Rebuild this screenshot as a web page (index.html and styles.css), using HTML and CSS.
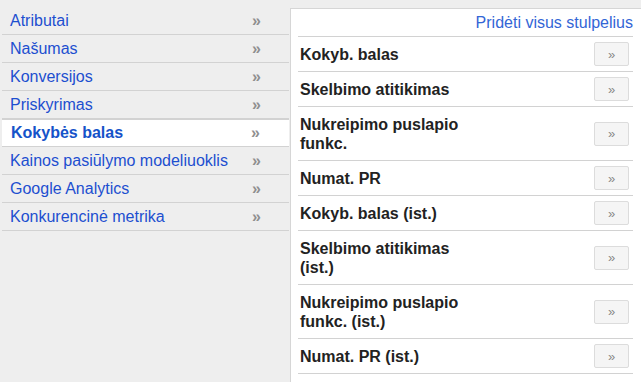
FILE: index.html
```html
<!DOCTYPE html>
<html lang="lt">
<head>
    <meta charset="UTF-8">
    <meta name="viewport" content="width=device-width, initial-scale=1.0">
    <title>Stulpeliai</title>
    <link rel="stylesheet" href="styles.css">
</head>
<body>
    <div class="page">
        <ul class="categories">
            <li class="category"><span class="category-name">Atributai</span><span class="chevron">»</span></li>
            <li class="category"><span class="category-name">Našumas</span><span class="chevron">»</span></li>
            <li class="category"><span class="category-name">Konversijos</span><span class="chevron">»</span></li>
            <li class="category"><span class="category-name">Priskyrimas</span><span class="chevron">»</span></li>
            <li class="category selected"><span class="category-name">Kokybės balas</span><span class="chevron">»</span></li>
            <li class="category"><span class="category-name">Kainos pasiūlymo modeliuoklis</span><span class="chevron">»</span></li>
            <li class="category"><span class="category-name">Google Analytics</span><span class="chevron">»</span></li>
            <li class="category"><span class="category-name">Konkurencinė metrika</span><span class="chevron">»</span></li>
        </ul>

        <div class="columns-panel">
            <div class="panel-header">
                <a href="#" class="add-all">Pridėti visus stulpelius</a>
            </div>
            <div class="column-row">
                <span class="column-name">Kokyb. balas</span>
                <button type="button" class="btn-add">»</button>
            </div>
            <div class="column-row">
                <span class="column-name">Skelbimo atitikimas</span>
                <button type="button" class="btn-add">»</button>
            </div>
            <div class="column-row">
                <span class="column-name">Nukreipimo puslapio funkc.</span>
                <button type="button" class="btn-add">»</button>
            </div>
            <div class="column-row">
                <span class="column-name">Numat. PR</span>
                <button type="button" class="btn-add">»</button>
            </div>
            <div class="column-row">
                <span class="column-name">Kokyb. balas (ist.)</span>
                <button type="button" class="btn-add">»</button>
            </div>
            <div class="column-row">
                <span class="column-name">Skelbimo atitikimas (ist.)</span>
                <button type="button" class="btn-add">»</button>
            </div>
            <div class="column-row">
                <span class="column-name">Nukreipimo puslapio funkc. (ist.)</span>
                <button type="button" class="btn-add">»</button>
            </div>
            <div class="column-row">
                <span class="column-name">Numat. PR (ist.)</span>
                <button type="button" class="btn-add">»</button>
            </div>
        </div>
    </div>
</body>
</html>
```

FILE: styles.css
```css
body {
    margin: 0;
    font-family: "Liberation Sans", Arial, sans-serif;
    background-color: #eeeeee;
}

.page {
    display: flex;
    align-items: flex-start;
    min-height: 100vh;
}

.categories {
    list-style: none;
    margin: 7px 1px 0 2px;
    padding: 0;
    width: 287px;
    flex-shrink: 0;
}

.category {
    display: flex;
    align-items: center;
    height: 27px;
    padding-left: 8px;
    border-bottom: 1px solid #d2d2d2;
    font-size: 16px;
    color: #1d4fd0;
}

.category-name {
    flex: 1;
}

.chevron {
    width: 37px;
    font-weight: bold;
    color: #8f8f8f;
}

.category.selected {
    background-color: white;
    box-shadow: inset 0 1px 0 #d2d2d2;
    padding-left: 9px;
}

.category.selected .category-name {
    font-weight: bold;
    color: #1553c9;
}

.category.selected .chevron {
    width: 38px;
}

.columns-panel {
    flex: 1;
    align-self: stretch;
    margin-top: 8px;
    padding: 0 8px 0 7px;
    background: white;
    border-top: 1px solid #d6d6d6;
    border-left: 1px solid #d6d6d6;
}

.panel-header {
    height: 27px;
    display: flex;
    align-items: center;
    justify-content: flex-end;
    border-bottom: 1px solid #d2d2d2;
}

.add-all {
    font-size: 16px;
    color: #3366d6;
    text-decoration: none;
}

.column-row {
    display: flex;
    align-items: center;
    justify-content: space-between;
    padding: 5px 4px 5px 2px;
    border-bottom: 1px solid #d2d2d2;
}

.column-name {
    width: 175px;
    padding: 3px 0 2px;
    font-size: 16px;
    line-height: 19px;
    font-weight: bold;
    color: #222;
}

.btn-add {
    width: 35px;
    height: 24px;
    padding: 0;
    background-color: #f5f5f5;
    border: 1px solid #dcdcdc;
    border-radius: 2px;
    font-family: "Liberation Sans", Arial, sans-serif;
    font-size: 13px;
    color: #888;
    cursor: pointer;
}
```
